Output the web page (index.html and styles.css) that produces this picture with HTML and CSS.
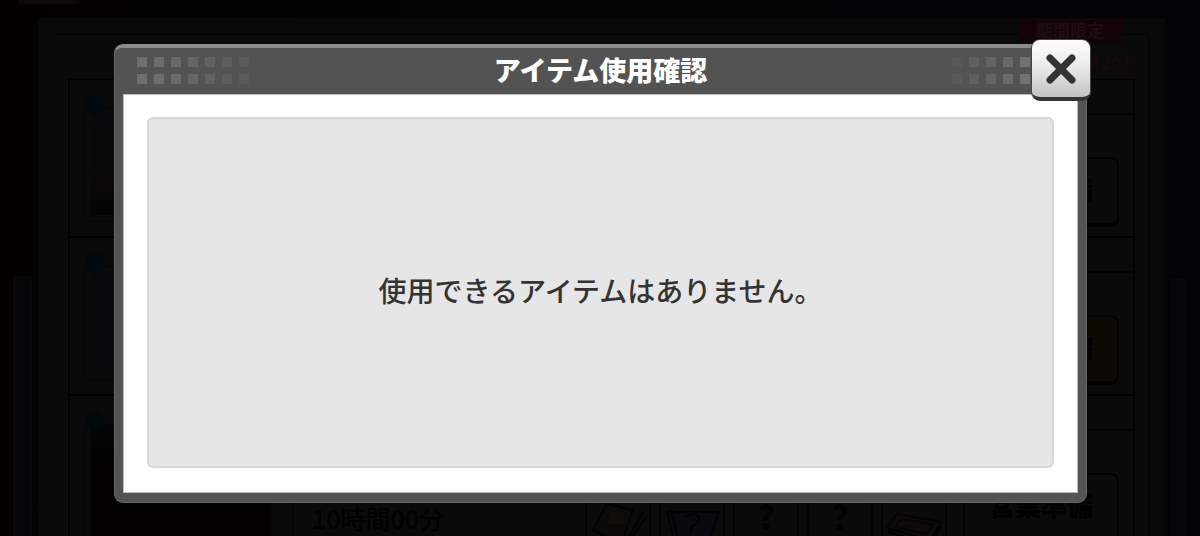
FILE: index.html
```html
<!DOCTYPE html>
<html lang="ja">
<head>
    <meta charset="UTF-8">
    <meta name="viewport" content="width=device-width, initial-scale=1.0">
    <title>アイテム使用確認</title>
    <link rel="stylesheet" href="styles.css">
</head>
<body>
    <!-- Dimmed screen behind the dialog -->
    <div class="screen">
        <div class="side side-left"><div class="tab"></div><div class="bar"></div></div>
        <main class="panel">
            <div class="panel-inner">
                <div class="panel-head">
                    <span class="limited">期間限定</span>
                    <span class="time-left">42分</span>
                </div>
                <div class="list">
                    <section class="row">
                        <div class="thumb"><i class="dot"></i><div class="photo"></div></div>
                        <div class="info"></div>
                        <div class="action"><div class="action-head"></div><button class="action-btn" type="button">営業準備</button></div>
                    </section>
                    <section class="row">
                        <div class="thumb"><i class="dot"></i><div class="photo photo-blue"></div></div>
                        <div class="info"></div>
                        <div class="action"><div class="action-head"></div><button class="action-btn action-gold" type="button">時間短縮</button></div>
                    </section>
                    <section class="row">
                        <div class="thumb"><i class="dot"></i><div class="photo photo-dark"></div></div>
                        <div class="info">
                            <p class="duration">10時間00分</p>
                            <div class="rewards">
                                <div class="reward">
                                    <svg width="66" height="60" viewBox="0 0 66 60" fill="none" stroke="#020202" stroke-width="2">
                                        <path d="M8 30 22 4 48 10 36 44Z" fill="#0b0908"/>
                                        <path d="M16 36 40 44 58 12M44 42 62 16"/>
                                        <path d="M25 12h14v12H22Z" fill="#0f0d07" stroke="none"/>
                                    </svg>
                                </div>
                                <div class="reward">
                                    <svg width="66" height="60" viewBox="0 0 66 60" fill="none" stroke="#020204" stroke-width="2">
                                        <path d="M8 12 16 44 48 50 60 12Z" fill="#08090c"/>
                                        <path d="M12 10 20 42M26 18q10-8 14 0 0 6-8 9v6M31 37v4"/>
                                    </svg>
                                </div>
                                <div class="reward">?</div>
                                <div class="reward">?</div>
                                <div class="reward">
                                    <svg width="66" height="60" viewBox="0 0 66 60" fill="none" stroke="#020202" stroke-width="2">
                                        <path d="M6 28 16 14 60 22 50 40Z" fill="#0e0a09"/>
                                        <path d="M14 27 20 19 52 24 46 34Z" stroke="#060303"/>
                                        <path d="M7 32 50 44 60 26"/>
                                    </svg>
                                </div>
                            </div>
                        </div>
                        <div class="action"><div class="action-head"></div><button class="action-btn" type="button">営業準備</button></div>
                    </section>
                </div>
            </div>
        </main>
        <div class="side side-right"><div class="bar"></div></div>
    </div>

    <div class="overlay">
        <div class="dialog" role="dialog" aria-labelledby="dialog-title">
            <header class="dialog-head">
                <svg class="dots" width="120" height="28" viewBox="0 0 120 28">
                    <g fill="#6f6f6f">
                        <g><path d="M0 0h10v10H0zM0 17h10v10H0z"/></g>
                        <g opacity=".95"><path d="M17 0h10v10H17zM17 17h10v10H17z"/></g>
                        <g opacity=".85"><path d="M34 0h10v10H34zM34 17h10v10H34z"/></g>
                        <g opacity=".7"><path d="M51 0h10v10H51zM51 17h10v10H51z"/></g>
                        <g opacity=".55"><path d="M68 0h10v10H68zM68 17h10v10H68z"/></g>
                        <g opacity=".4"><path d="M85 0h10v10H85zM85 17h10v10H85z"/></g>
                        <g opacity=".25"><path d="M102 0h10v10h-10zM102 17h10v10h-10z"/></g>
                    </g>
                </svg>
                <h1 class="dialog-title" id="dialog-title">アイテム使用確認</h1>
                <svg class="dots dots-right" width="120" height="28" viewBox="0 0 120 28">
                    <g fill="#757575">
                        <g><path d="M0 0h10v10H0zM0 17h10v10H0z"/></g>
                        <g><path d="M17 0h10v10H17zM17 17h10v10H17z"/></g>
                        <g opacity=".9"><path d="M34 0h10v10H34zM34 17h10v10H34z"/></g>
                        <g opacity=".7"><path d="M51 0h10v10H51zM51 17h10v10H51z"/></g>
                        <g opacity=".5"><path d="M68 0h10v10H68zM68 17h10v10H68z"/></g>
                        <g opacity=".35"><path d="M85 0h10v10H85zM85 17h10v10H85z"/></g>
                        <g opacity=".2"><path d="M102 0h10v10h-10zM102 17h10v10h-10z"/></g>
                    </g>
                </svg>
            </header>
            <div class="dialog-body">
                <div class="message-box">
                    <p class="message">使用できるアイテムはありません。</p>
                </div>
            </div>
            <button class="close" type="button" aria-label="閉じる">
                <svg width="30" height="30" viewBox="0 0 30 30" stroke="#333" stroke-width="7" stroke-linecap="round">
                    <path d="M4 4 26 26M26 4 4 26"/>
                </svg>
            </button>
        </div>
    </div>
</body>
</html>
```
FILE: styles.css
```css
* {
    box-sizing: border-box;
}

body {
    margin: 0;
    background: #020202;
    font-family: "Noto Sans CJK JP", sans-serif;
    color: #333;
}

h1, p {
    margin: 0;
}

button {
    font-family: inherit;
    padding: 0;
    cursor: pointer;
}

/* Background screen */
.screen {
    display: grid;
    grid-template-columns: 38px 1fr 35px;
    height: 100vh;
    overflow: hidden;
    background: linear-gradient(90deg, #020001, #040404 50%, #010305);
}

.side {
    display: flex;
    flex-direction: column;
    padding: 0 3px;
}

.side-left {
    padding: 0 6px 0 13px;
}

.side .bar {
    flex: 1;
    background: #050608;
    border: 2px solid #070809;
    border-bottom: none;
    border-radius: 3px 3px 0 0;
}

.side-left .tab {
    width: 62px;
    height: 4px;
    background: #0a0a0a;
    border-radius: 0 0 6px 6px;
    margin: 0 0 272px 5px;
}

.side-right .bar {
    flex: none;
    width: 20px;
    height: 100%;
    margin-top: 276px;
    border-color: #020203;
}

.panel {
    margin-top: 17px;
    padding: 16px 16px 0;
    background: #080808;
    border-top: 1px solid #000;
}

.panel-inner {
    padding: 0 13px;
    background: #0a0a0a;
    border: 1px solid #030303;
}

.panel-head {
    display: flex;
    flex-direction: column;
    align-items: flex-end;
    height: 45px;
    margin-top: -17px;
    margin-bottom: 16px;
}

.limited {
    width: 102px;
    margin-right: 14px;
    background: #140306;
    color: #1e0e10;
    font-size: 17px;
    font-weight: 700;
    line-height: 24px;
    text-align: center;
}

.time-left {
    margin-right: 4px;
    margin-top: 5px;
    color: #180909;
    font-size: 20px;
    font-weight: 700;
    line-height: 28px;
}

.list {
    border: 1px solid #000;
    border-width: 1px 2px;
}

.row {
    display: grid;
    grid-template-columns: 222px 1fr 170px;
    height: 158px;
    border-bottom: 2px solid #000;
}

.thumb {
    display: flex;
    margin: 28px 20px 14px 14px;
    border: 1px solid #050505;
    border-radius: 4px;
}

.dot {
    width: 20px;
    height: 20px;
    margin-top: -14px;
    background: #03090b;
    border-radius: 50%;
}

.photo {
    flex: 1;
    margin: 6px 0 6px -14px;
    background: linear-gradient(#08090b, #0a0808 60%, #050404);
}

.photo-blue {
    background: #07090b;
}

.photo-dark {
    margin-top: 0;
    margin-bottom: 0;
    background: linear-gradient(#040507, #030101 40%);
}

.info {
    display: flex;
    justify-content: space-between;
    padding: 76px 16px 0 19px;
    border-left: 1px solid #020202;
}

.duration {
    padding-top: 30px;
    font-size: 25px;
    font-weight: 500;
    line-height: 32px;
    color: #010101;
}

.rewards {
    display: flex;
    gap: 8px;
}

.reward {
    width: 66px;
    height: 76px;
    padding-top: 26px;
    border: 2px solid #030303;
    font-size: 32px;
    font-weight: 900;
    line-height: 32px;
    text-align: center;
    color: #020202;
}

.reward svg {
    display: block;
    margin-left: -2px;
}

.action-head {
    height: 35px;
    border-bottom: 2px solid #030303;
}

.action-btn {
    width: 156px;
    height: 70px;
    margin-top: 42px;
    padding-bottom: 6px;
    background: #0a0a0a;
    border: 2px solid #020202;
    border-bottom-width: 4px;
    border-radius: 8px;
    color: #010101;
    font-size: 26px;
    font-weight: 900;
}

.action-gold {
    background: #0d0a04;
}

/* Dialog */
.overlay {
    position: fixed;
    inset: 0;
    display: flex;
    padding: 44px 113px 33px 114px;
}

.dialog {
    position: relative;
    flex: 1;
    display: flex;
    flex-direction: column;
    padding: 0 8px 9px;
    background: #535353;
    border: 1px solid #686868;
    border-top: 4px solid #8c8c8e;
    border-radius: 9px;
}

.dialog-head {
    display: flex;
    justify-content: space-between;
    align-items: center;
    height: 46px;
    padding: 0 14px;
}

.dots-right {
    transform: scaleX(-1);
}

.dialog-title {
    color: #fff;
    font-size: 27px;
    font-weight: 900;
    line-height: 40px;
    padding-bottom: 2px;
}

.dialog-body {
    flex: 1;
    display: flex;
    padding: 22px 23px 24px;
    background: #fff;
    border: 1px solid #bbb;
}

.message-box {
    flex: 1;
    display: flex;
    justify-content: center;
    align-items: center;
    padding-bottom: 6px;
    background: #e6e6e6;
    border: 2px solid #d7d7d8;
    border-radius: 6px;
}

.message {
    font-size: 28px;
    font-weight: 500;
    line-height: 40px;
}

.close {
    position: absolute;
    top: -9px;
    right: -5px;
    display: flex;
    justify-content: center;
    align-items: center;
    width: 60px;
    height: 62px;
    background: linear-gradient(#fff, #e8e8e8 50%, #c2c2c2);
    border: 1px solid #444;
    border-bottom: 4px solid #333;
    border-radius: 9px;
}
```
